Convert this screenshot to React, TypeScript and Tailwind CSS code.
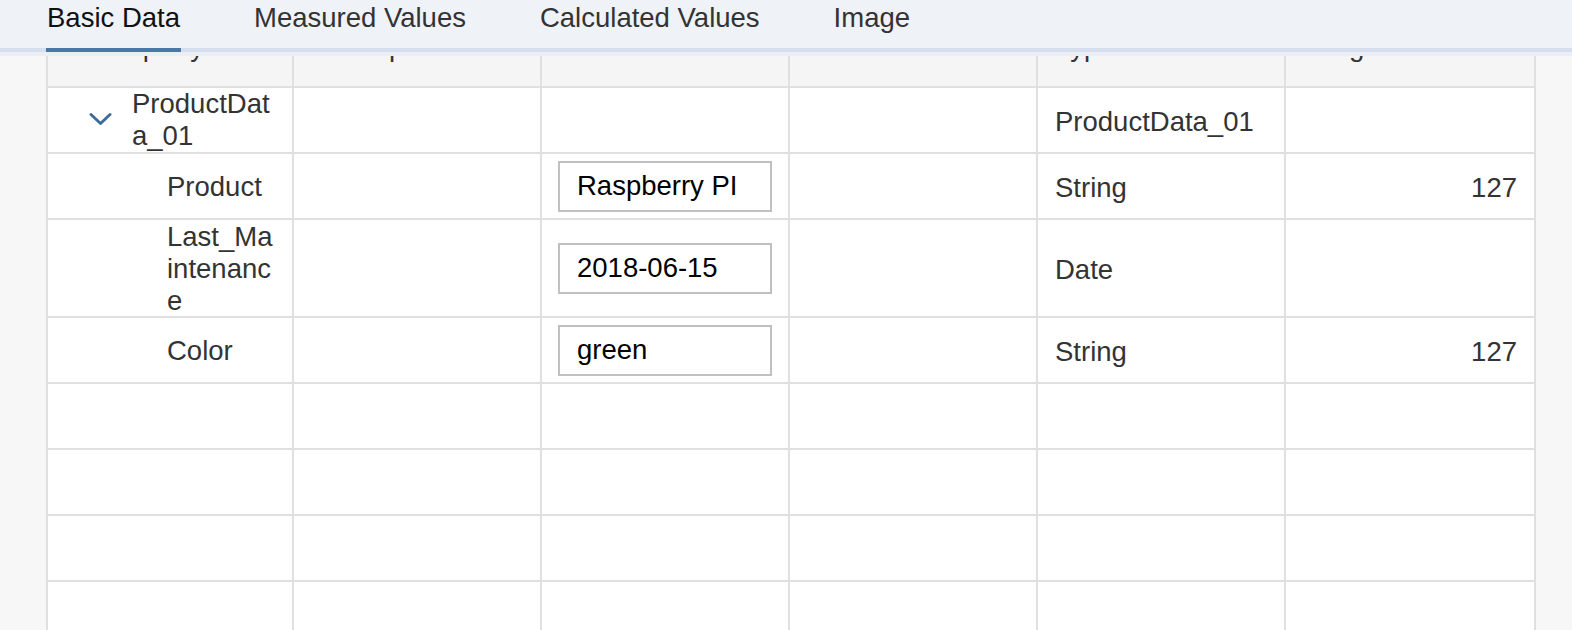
import React from "react";

type Row = {
  name: string;
  level: 0 | 1;
  value?: string;
  type?: string;
  length?: string;
  tall?: boolean;
};

const ROWS: Row[] = [
  { name: "ProductData_01", level: 0, type: "ProductData_01" },
  { name: "Product", level: 1, value: "Raspberry PI", type: "String", length: "127" },
  { name: "Last_Maintenance", level: 1, value: "2018-06-15", type: "Date", tall: true },
  { name: "Color", level: 1, value: "green", type: "String", length: "127" },
];

const TABS = ["Basic Data", "Measured Values", "Calculated Values", "Image"];
const HEADERS = ["Property Data", "Description", "Value", "Unit of Measure", "Type", "Length"];

const GRID = "grid grid-cols-[246px_248px_248px_248px_248px_250px] border-b-2 border-[#e0e0e0]";
const CELL = "border-r-2 border-[#e0e0e0] flex items-center";

function Chevron() {
  return (
    <svg width="23" height="14" viewBox="0 0 23 14" fill="none" className="shrink-0 mt-[-2px]">
      <path d="M2 2.5 L11.5 11.5 L21 2.5" stroke="#3f6c9c" strokeWidth="3" strokeLinecap="round" strokeLinejoin="round" />
    </svg>
  );
}

function TabBar() {
  return (
    <div>
      <div className="flex items-start gap-[72px] pl-[46px] h-[52px] border-b-4 border-[#d5dfee] bg-[#eff2f7]">
        {TABS.map((t, i) => (
          <div
            key={t}
            className={`h-[52px] px-[1px] pt-[2px] border-b-4 text-[27.5px] leading-[32px] ${
              i === 0 ? "border-[#4a77a7] text-[#111]" : "border-transparent text-[#333]"
            }`}
          >
            {t}
          </div>
        ))}
      </div>
      <div className="h-[4px] bg-[#ebeff5]" />
    </div>
  );
}

function DataRow({ row }: { row: Row }) {
  const h = row.tall ? "h-[96px]" : "h-[64px]";
  return (
    <div className={GRID}>
      {/* name column with tree indent */}
      <div className={`${CELL} ${h} ${row.level === 0 ? "pl-[41px] gap-[20px]" : "pl-[119px] pt-[2px]"} pr-[17px]`}>
        {row.level === 0 && <Chevron />}
        <span className="break-all text-[#333]">{row.name}</span>
      </div>
      <div className={`${CELL} ${h}`} />
      <div className={`${CELL} ${h} px-[16px]`}>
        {row.value && (
          <input
            readOnly
            value={row.value}
            className="w-full h-[51px] border-2 border-[#c0c0c0] bg-white px-[17px] text-[27.5px] text-black outline-none"
          />
        )}
      </div>
      <div className={`${CELL} ${h}`} />
      <div className={`${CELL} ${h} px-[17px] pt-[4px] text-[#333]`}>{row.type}</div>
      <div className={`${CELL} ${h} justify-end px-[17px] pt-[4px] text-[#333]`}>{row.length}</div>
    </div>
  );
}

function EmptyRow() {
  return (
    <div className={GRID}>
      {HEADERS.map((c) => (
        <div key={c} className={`${CELL} h-[64px]`} />
      ))}
    </div>
  );
}

export default function App() {
  return (
    <div className="w-full h-[630px] overflow-hidden bg-[#f7f7f7] font-['Liberation_Sans',Arial,sans-serif]">
      <TabBar />
      <div className="overflow-hidden h-[574px]">
        <div className="-mt-[34px] ml-[46px] w-[1490px] border-l-2 border-[#e0e0e0] bg-white text-[27.5px] leading-[32px]">
          {/* header row, mostly scrolled under the tab bar */}
          <div className={`${GRID} bg-[#f5f5f5]`}>
            {HEADERS.map((c, i) => (
              <div
                key={c}
                className={`border-r-2 border-[#e0e0e0] h-[64px] flex items-end pb-[24px] text-[#333] ${
                  i === 0 ? "pl-[52px]" : "pl-[17px]"
                }`}
              >
                <span className="translate-y-[1px]">{c}</span>
              </div>
            ))}
          </div>
          {ROWS.map((r) => (
            <DataRow key={r.name} row={r} />
          ))}
          <EmptyRow />
          <EmptyRow />
          <EmptyRow />
          <EmptyRow />
        </div>
      </div>
    </div>
  );
}
